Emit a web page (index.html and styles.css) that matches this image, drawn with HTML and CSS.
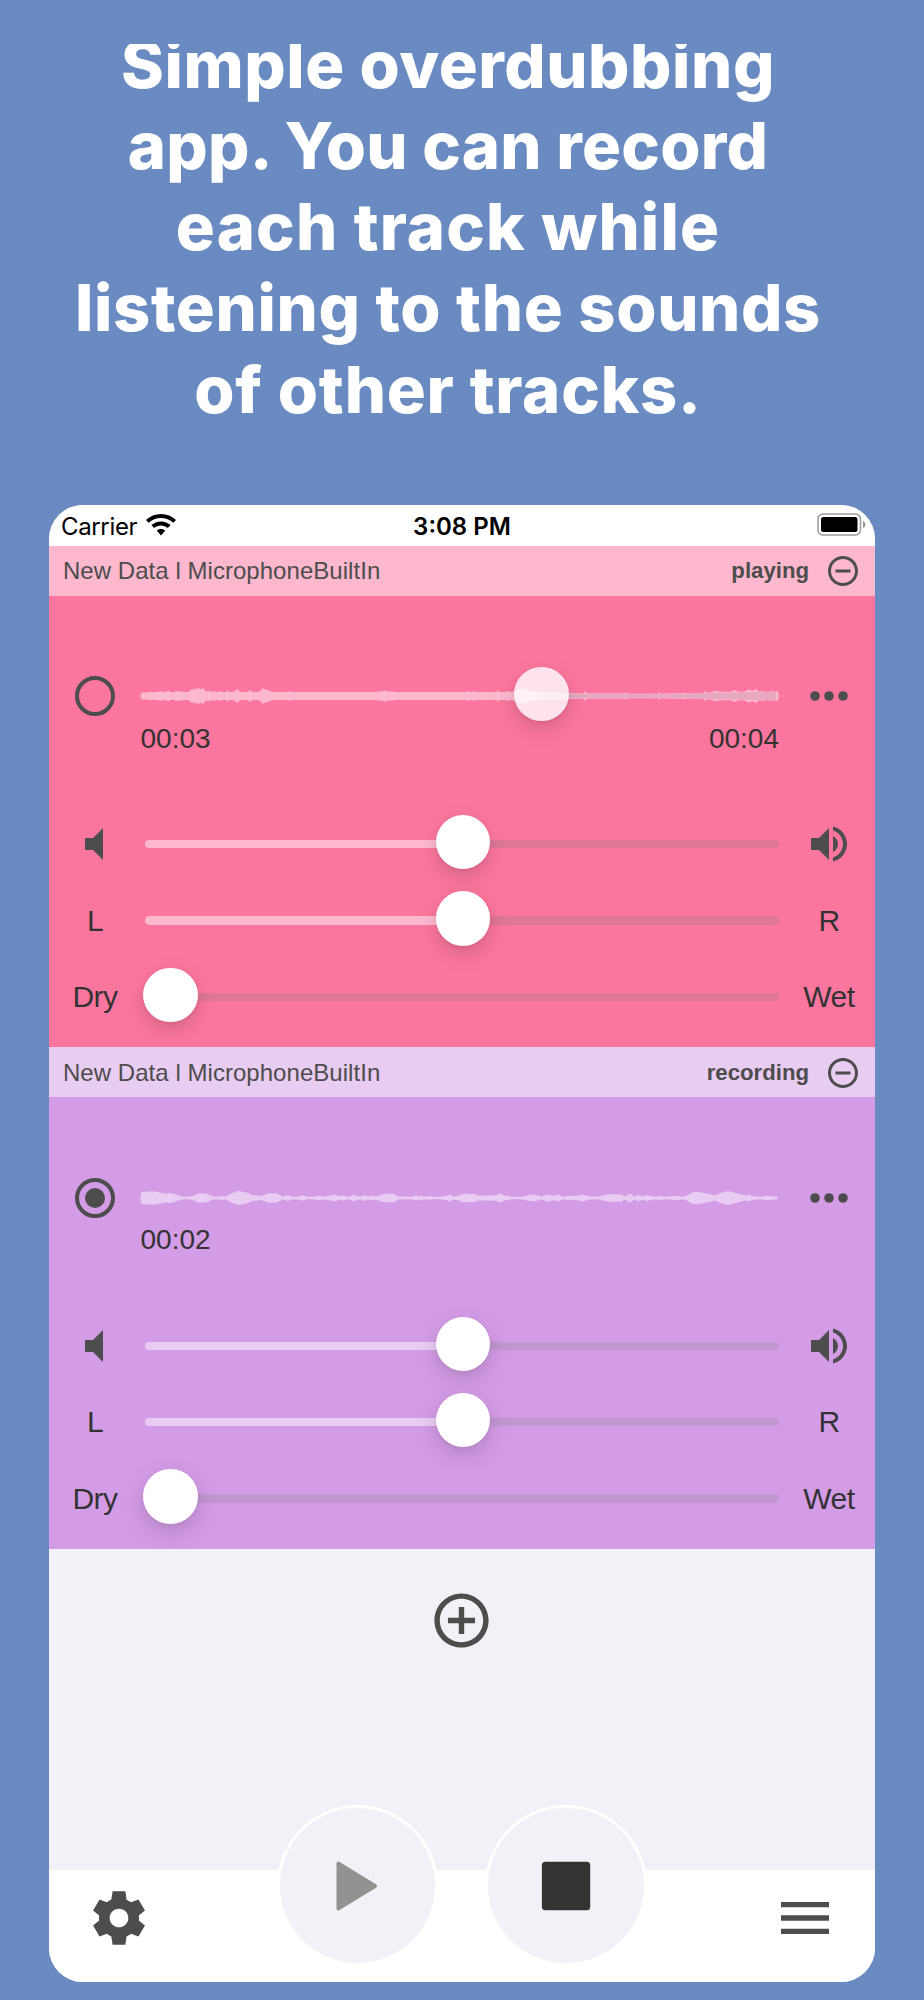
FILE: index.html
```html
<!DOCTYPE html>
<html lang="en">
<head>
<meta charset="utf-8">
<title>Overdub</title>
<link rel="stylesheet" href="styles.css">
</head>
<body>
<svg class="defs" width="0" height="0" aria-hidden="true">
  <symbol id="minus" viewBox="0 0 24 24"><path d="M7 11v2h10v-2H7zm5-9C6.48 2 2 6.48 2 12s4.480 10 10 10 10-4.480 10-10S17.520 2 12 2zm0 18c-4.410 0-8-3.590-8-8s3.590-8 8-8 8 3.590 8 8-3.590 8-8 8z"/></symbol>
  <symbol id="dots" viewBox="0 0 24 24"><circle cx="6" cy="12" r="2.050"/><circle cx="12" cy="12" r="2.050"/><circle cx="18" cy="12" r="2.050"/></symbol>
  <symbol id="mute" viewBox="0 0 24 24"><path d="M7 9v6h4l5 5V4l-5 5H7z"/></symbol>
  <symbol id="loud" viewBox="0 0 24 24"><path d="M3 9v6h4l5 5V4L7 9H3zm13.500 3c0-1.770-1.020-3.290-2.500-4.030v8.050c1.480-.73 2.500-2.250 2.500-4.020zM14 3.230v2.060c2.890.86 5 3.540 5 6.710s-2.110 5.850-5 6.710v2.060c4.010-.91 7-4.490 7-8.770s-2.990-7.860-7-8.770z"/></symbol>
</svg>

<main class="page">
  <h1 class="headline">
    <span class="line line-1">Simple overdubbing</span>
    <span class="line line-2">app. You can record</span>
    <span class="line line-3">each track while</span>
    <span class="line line-4">listening to the sounds</span>
    <span class="line line-5">of other tracks.</span>
  </h1>

  <section class="phone">
    <div class="status">
      <div class="carrier"><span>Carrier</span>
        <svg class="wifi" viewBox="0 0 30 22"><path d="M15 0C9.200 0 4 2.200 0 5.900l2.700 2.800C6 5.700 10.300 3.900 15 3.900s9 1.800 12.300 4.800L30 5.900C26 2.200 20.800 0 15 0z"/><path d="M15 7.400c-3.700 0-7 1.400-9.600 3.700l2.800 2.900c1.800-1.600 4.200-2.600 6.800-2.600s5 1 6.800 2.600l2.800-2.900C22 8.800 18.700 7.400 15 7.400z"/><path d="M15 14.900c-1.700 0-3.100.6-4.300 1.600L15 21.600l4.300-5.100c-1.200-1-2.600-1.600-4.300-1.600z"/></svg>
      </div>
      <time class="clock">3:08 PM</time>
      <svg class="battery" viewBox="0 0 50 24"><rect x="1" y="1" width="42.500" height="21" rx="5" fill="none" stroke="#999" stroke-width="1.500"/><rect x="4" y="4" width="36.500" height="15" rx="2.500"/><path d="M46 8c3.200 1.200 3.200 6 0 7.200z" fill="#999"/></svg>
    </div>

    <article class="track pink">
      <header class="bar"><span class="name">New Data l MicrophoneBuiltIn</span><span class="state">playing</span><svg class="ic36"><use href="#minus"/></svg></header>
      <div class="panel">
        <div class="row wave-row">
          <svg class="ic48" viewBox="0 0 24 24"><circle cx="12" cy="12" r="9" fill="none" stroke="#4d4d4d" stroke-width="2"/></svg>
          <div class="wave">
            <svg class="wave-svg" viewBox="0 -12 640 24">
              <path id="wp" class="w-light" d="M0 0L2 -4 5 -3 8 -4 18 -4 20 -5 22 -4 27 -4.500 28 -6 30 -4 35 -4 36 -5.500 38 -4 40 -5 42 -4 48 -4 50 -5 52 -7 54 -6 55 -8 57 -7 59 -8 61 -6.500 63 -8 65 -5.500 67 -4.500 69 -5.500 71 -4 74 -5 76 -4 79 -4 80 -5.500 82 -4 86 -4 87 -6 89 -4 93 -4 98 -7 100 -4 108 -4 110 -6 112 -4 118 -4 121 -5.500 123 -8 125 -6.500 128 -6 130 -5 133 -4 148 -4 150 -4.800 152 -4 230 -4 240 -4.500 245 -5.500 250 -4 252 -5 254 -4 326 -4 328 -5 330 -3.800 334 -5 336 -4 357 -4 358 -6 360 -4 366 -4 368 -5.500 370 -4 374 -5 380 -8 384 -7 390 -5 400 -4 430 -3 444 -2.700 445 -5 447 -2.700 480 -2.500 486 -3 490 -2.300 518 -2.300 519 -4 521 -2.300 545 -3 550 -2.500 562 -2.700 566 -5 568 -3 577 -5.500 580 -4 584 -4.500 590 -4 594 -6 598 -4.500 602 -4 606 -5 609 -7 612 -5 616 -7 619 -4.500 623 -5 626 -4 632 -5 635 -4 638 -5 639 0z"/>
              <use href="#wp" transform="scale(1 -1)"/>
              <path id="wd" class="w-dark" d="M400 0V-3L444 -2.200 500 -1.800 550 -2.200 565 -3 600 -3.700 635 -4 637 0z"/>
              <use href="#wd" transform="scale(1 -1)"/>
            </svg>
            <i class="thumb ghost"></i>
          </div>
          <svg class="ic56"><use href="#dots"/></svg>
        </div>
        <div class="times"><span>00:03</span><span>00:04</span></div>
        <div class="row"><svg class="ic48"><use href="#mute"/></svg><div class="slider half"><i class="thumb"></i></div><svg class="ic48"><use href="#loud"/></svg></div>
        <div class="row"><span class="lab">L</span><div class="slider half"><i class="thumb"></i></div><span class="lab">R</span></div>
        <div class="row"><span class="lab">Dry</span><div class="slider zero"><i class="thumb"></i></div><span class="lab">Wet</span></div>
      </div>
    </article>

    <article class="track purple">
      <header class="bar"><span class="name">New Data l MicrophoneBuiltIn</span><span class="state">recording</span><svg class="ic36"><use href="#minus"/></svg></header>
      <div class="panel">
        <div class="row wave-row">
          <svg class="ic48" viewBox="0 0 24 24"><circle cx="12" cy="12" r="9" fill="none" stroke="#4d4d4d" stroke-width="2"/><circle cx="12" cy="12" r="5"/></svg>
          <div class="wave">
            <svg class="wave-svg" viewBox="0 -12 640 24">
              <path id="wq" class="w-light" d="M0 0L1.500 -6 8 -6.500 16 -6.500 22 -5 27 -4.300 30 -5.200 34 -4 39 -2.500 44 -1.200 50 -1.500 54 -2.500 57 -4 61 -5 64 -4 67 -4.600 72 -1.800 77 -1.300 82 -2 86 -1.300 90 -4 95 -6 99 -7.300 103 -6 108 -5.300 112 -3 117 -2.500 120 -2 124 -3 129 -5 133 -4.500 136 -5 140 -2.800 143 -1.600 148 -3 152 -1.500 158 -1.500 162 -2.700 168 -1 174 -1.500 179 -2.500 182 -1.500 187 -2 191 -2.500 195 -3.500 199 -1.800 204 -2.500 207 -1.300 211 -2 214 -3.500 217 -2 221 -1.600 225 -3 228 -1.600 233 -2.600 236 -1.500 240 -3 245 -4.500 249 -4 254 -4.200 258 -1.500 272 -1.200 277 -2.500 279 -1.500 281 -2.500 284 -1.200 290 -1.800 295 -1 302 -1.500 306 -2 310 -3.800 313 -1.500 319 -2.500 324 -4.500 328 -4 335 -4 339 -2.200 350 -2.800 355 -2.500 360 -4.500 364 -2.500 368 -2.300 372 -1.200 380 -1 388 -2.800 394 -3.600 398 -2.500 401 -1.500 405 -2.500 409 -3.800 413 -2 418 -3.500 423 -1.300 431 -2.500 435 -1.800 443 -3.500 449 -1.500 458 -1.300 465 -3 471 -4 477 -3.500 481 -3.800 485 -1.500 490 -4.500 494 -1.500 498 -3.300 503 -1.800 507 -3 514 -1.300 519 -2 526 -1.300 537 -2.200 543 -1.300 548 -3 552 -5.500 557 -6.300 562 -5.300 569 -4 575 -2.500 579 -4.500 584 -6 588 -7 594 -5.500 600 -3.800 605 -2.500 609 -3.300 613 -1.800 620 -1.300 628 -2.200 633 -1.500 637 -1.500 638 0z"/>
              <use href="#wq" transform="scale(1 -1)"/>
            </svg>
          </div>
          <svg class="ic56"><use href="#dots"/></svg>
        </div>
        <div class="times"><span>00:02</span></div>
        <div class="row"><svg class="ic48"><use href="#mute"/></svg><div class="slider half"><i class="thumb"></i></div><svg class="ic48"><use href="#loud"/></svg></div>
        <div class="row"><span class="lab">L</span><div class="slider half"><i class="thumb"></i></div><span class="lab">R</span></div>
        <div class="row"><span class="lab">Dry</span><div class="slider zero"><i class="thumb"></i></div><span class="lab">Wet</span></div>
      </div>
    </article>

    <div class="empty">
      <svg class="add" viewBox="0 0 24 24"><path d="M13 7h-2v4H7v2h4v4h2v-4h4v-2h-4V7zm-1-5C6.480 2 2 6.480 2 12s4.480 10 10 10 10-4.480 10-10S17.520 2 12 2zm0 18c-4.410 0-8-3.590-8-8s3.590-8 8-8 8 3.590 8 8-3.590 8-8 8z"/></svg>
    </div>

    <footer class="dock">
      <svg class="ic64" viewBox="0 0 24 24"><path fill-rule="evenodd" d="M19.430 12.980c.04-.32.07-.64.07-.98s-.03-.66-.07-.98l2.300-1.800-2.430-4.200-2.790 1.120c-.52-.4-1.080-.73-1.690-.98L14.400 2H9.600l-.47 3.070c-.61.25-1.170.59-1.690.98L4.700 5.020l-2.430 4.200 2.300 1.800c-.04.32-.07.65-.07.98s.03.66.07.98l-2.300 1.800 2.430 4.200 2.740-1.030c.52.4 1.080.73 1.690.98L9.600 22h4.800l.42-3.070c.61-.25 1.170-.59 1.690-.98l2.790 1.030 2.430-4.200-2.300-1.800zM12 15.500c-1.930 0-3.500-1.570-3.500-3.500s1.570-3.500 3.500-3.500 3.500 1.570 3.500 3.500-1.570 3.500-3.500 3.500z"/></svg>
      <div class="transport">
        <div class="round"><svg viewBox="0 0 56 56"><path d="M9.500 5.600v44.800L46 28z" fill="#929292" stroke="#929292" stroke-width="4" stroke-linejoin="round"/></svg></div>
        <div class="round"><svg viewBox="0 0 56 56"><rect x="3.900" y="3.700" width="48.300" height="48.600" rx="3.500" fill="#333"/></svg></div>
      </div>
      <svg class="ic64" viewBox="0 0 24 24"><path d="M3 18h18v-2H3v2zm0-5h18v-2H3v2zm0-7v2h18V6H3z"/></svg>
    </footer>
  </section>
</main>
</body>
</html>
```
FILE: styles.css
```css
* { box-sizing: border-box; }

body {
  margin: 0;
  background: #6a8bc1;
  font-family: "Liberation Sans", Arial, sans-serif;
  color: #333;
}

svg { display: block; flex: none; fill: #4d4d4d; }
.defs { position: absolute; }

.page { height: 2000px; overflow: hidden; padding: 44px 49px 0; }

.headline {
  margin: 0 28px 0 0;
  height: 461px;
  overflow: hidden;
  color: #fff;
  font: 800 65px/81.300px Inter, sans-serif;
  text-align: center;
}
.line { display: block; white-space: nowrap; margin: 0 -20px; }
.line-1 { margin-top: -20.500px; letter-spacing: .55px; }
.line-2 { letter-spacing: .25px; }
.line-3 { letter-spacing: 1.150px; }
.line-4 { letter-spacing: .65px; }
.line-5 { letter-spacing: .8px; }

.phone {
  width: 826px;
  height: 1477px;
  border-radius: 34px;
  overflow: hidden;
  background: #f2f1f7;
  display: flex;
  flex-direction: column;
}

.status {
  height: 41px;
  background: #fff;
  display: grid;
  grid-template-columns: 1fr auto 1fr;
  align-items: center;
  padding: 2px 8px 0 12px;
  font: 24px/30px Inter, sans-serif;
  color: #000;
}
.carrier { display: flex; align-items: center; gap: 9px; letter-spacing: -.35px; }
.wifi { width: 30px; height: 22px; fill: #000; margin-bottom: 3px; }
.clock { font-weight: 600; margin-left: -4px; }
.battery { width: 50px; height: 24px; fill: #000; justify-self: end; margin-bottom: 3px; }

.bar {
  height: 50px;
  display: flex;
  align-items: center;
  padding: 0 14px;
  background: var(--pale);
  color: #4d4d4d;
  font-size: 24px;
}
.purple .bar { padding-top: 1px; }
.name { flex: 1; letter-spacing: .04px; }
.state { font-weight: bold; font-size: 22.200px; margin-right: 16px; }
.ic36 { width: 36px; height: 36px; }
.ic48 { width: 48px; height: 48px; }
.ic56 { width: 56px; height: 56px; }
.ic64 { width: 64px; height: 64px; }

.pink { --pale: #fdb8ce; --main: #fb769e; --rail: #df7797; }
.purple { --pale: #e8ccf2; --main: #d49be6; --rail: #c096cf; }

.panel { height: 452px; padding-top: 62.300px; background: var(--main); overflow: hidden; }
.pink .panel { height: 451px; }
.purple .panel { padding-top: 63px; }

.row {
  height: 76.300px;
  display: grid;
  grid-template-columns: 92px 1fr 92px;
  align-items: center;
  justify-items: center;
}
.wave { position: relative; width: 640px; height: 24px; justify-self: start; margin-left: -1px; }
.wave-svg { width: 640px; height: 24px; }
.w-light, .w-light + use { fill: var(--pale); }
.w-dark { fill: #e6a9bf; }

.times {
  height: 72px;
  display: flex;
  justify-content: space-between;
  padding: 0 96px 0 91.500px;
  font-size: 28px;
  line-height: 34px;
  margin-top: -13px;
  margin-bottom: 12.500px;
}

.slider { position: relative; width: 634px; height: 8.500px; border-radius: 5px; background: var(--rail); justify-self: start; margin-left: 4px; }
.half { background: linear-gradient(90deg, var(--pale) 50%, var(--rail) 50%); }
.thumb {
  position: absolute;
  top: -25px;
  left: 290.500px;
  width: 54.500px;
  height: 54.500px;
  border-radius: 50%;
  background: #fff;
  box-shadow: 0 8px 22px rgba(0, 0, 0, .15), 0 2px 4px rgba(0, 0, 0, .05);
}
.zero .thumb { left: -2px; }
.ghost { left: 374px; top: -17.500px; background: rgba(255, 255, 255, .8); }

.lab { font-size: 30px; letter-spacing: -.5px; }

.empty { flex: 1; display: flex; justify-content: center; padding: 39px 1px 0 0; }
.add { width: 65px; height: 65px; }

.dock {
  height: 112px;
  background: #fff;
  display: flex;
  justify-content: space-between;
  align-items: flex-start;
  padding: 16px 38px 0;
}
.transport { display: flex; gap: 47px; margin: -81.200px 0 0 -1px; }
.round {
  width: 161.500px;
  height: 161.500px;
  border: 3.500px solid #fff;
  border-radius: 50%;
  background: #f2f1f7;
  display: flex;
  align-items: center;
  justify-content: center;
}
.round svg { width: 56px; height: 56px; }
```
